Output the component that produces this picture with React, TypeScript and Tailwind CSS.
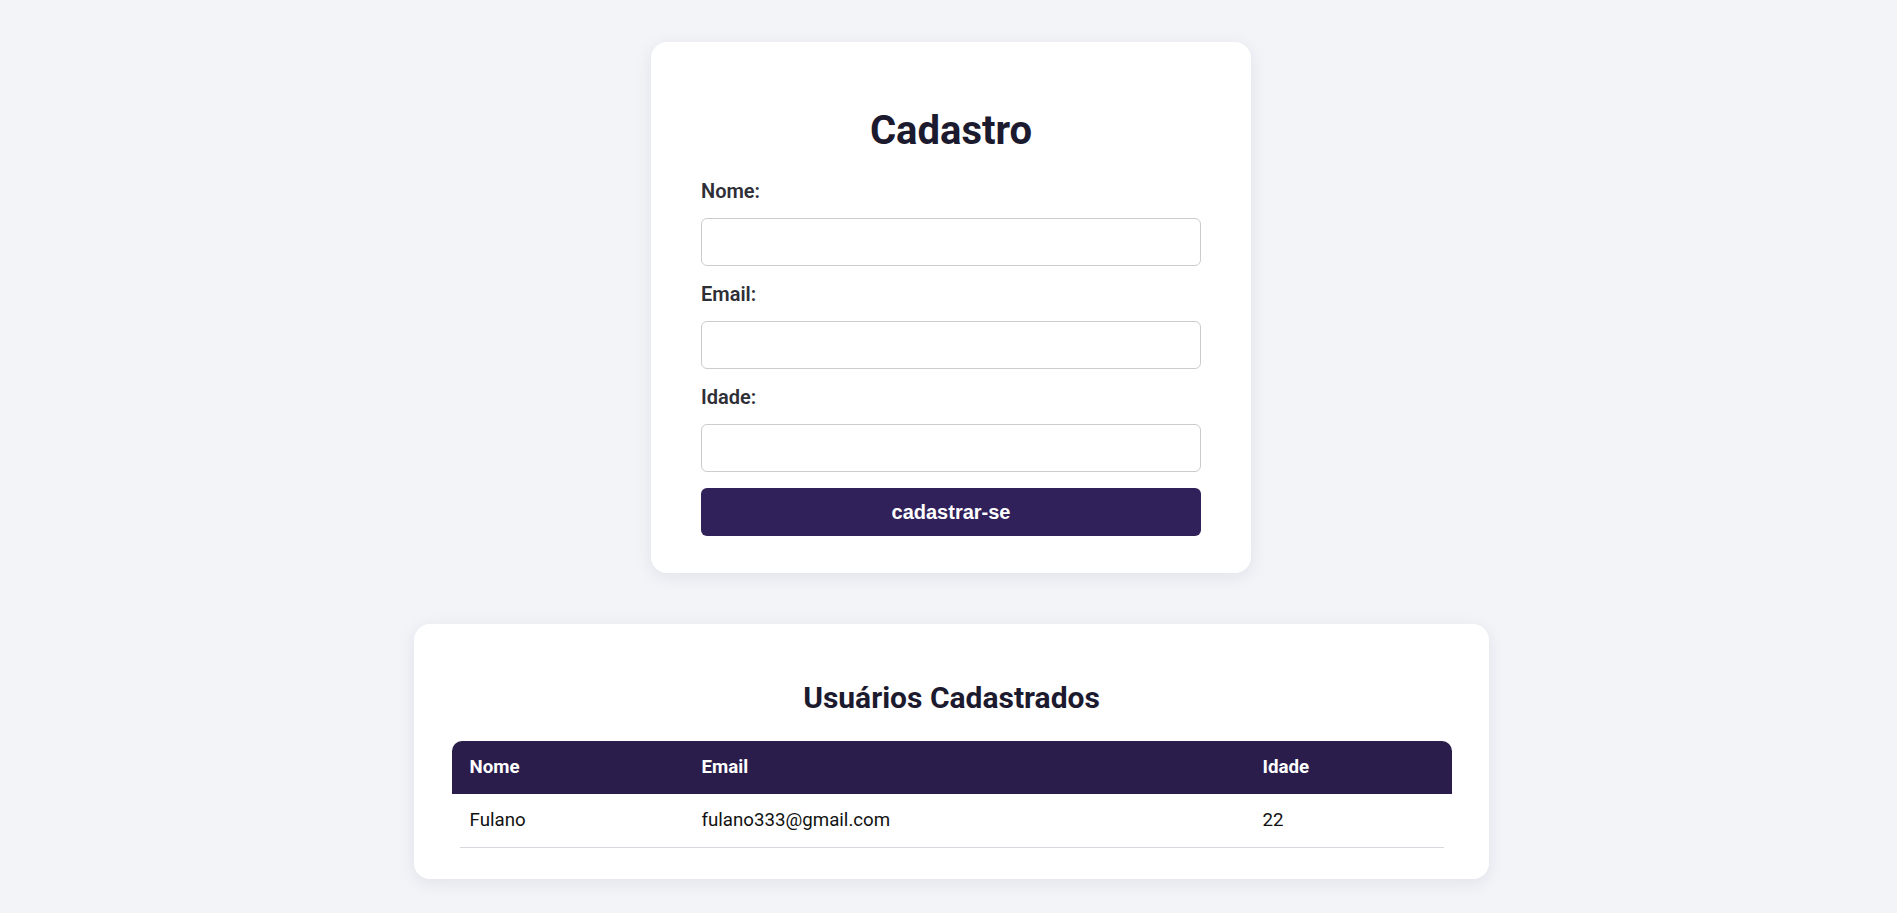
import { useState } from 'react';

const USERS = [{ nome: 'Fulano', email: 'fulano333@gmail.com', idade: 22 }];

const FIELDS = [
  { id: 'nome', label: 'Nome:', type: 'text' },
  { id: 'email', label: 'Email:', type: 'email' },
  { id: 'idade', label: 'Idade:', type: 'number' },
];

export default function App() {
  const [values, setValues] = useState<Record<string, string>>({ nome: '', email: '', idade: '' });

  return (
    <div className="min-h-screen bg-[#f3f4f8] flex flex-col items-center pt-[42px] pb-[40px] pl-[5px] gap-[51px] font-['Roboto',sans-serif]">
      {/* Cadastro form */}
      <div className="w-[600px] bg-white rounded-2xl shadow-[0_4px_18px_rgba(20,20,60,0.08)] px-[50px] pt-[65px] pb-[37px]">
        <h1 className="text-[40px] leading-[47px] font-bold text-center text-[#1c1a2e]">Cadastro</h1>
        <form className="mt-[26px] flex flex-col" onSubmit={e => e.preventDefault()}>
          {FIELDS.map((f, i) => (
            <div key={f.id} className={i > 0 ? 'mt-[17px]' : ''}>
              <label htmlFor={f.id} className="block text-[20px] leading-[22px] font-semibold text-[#2e2e36]">
                {f.label}
              </label>
              <input
                id={f.id}
                type={f.type}
                value={values[f.id]}
                onChange={e => setValues({ ...values, [f.id]: e.target.value })}
                className="mt-[16px] block w-full h-[48px] border border-[#cccccc] rounded-md bg-white px-3 outline-none"
              />
            </div>
          ))}
          <button
            type="submit"
            className="mt-[16px] h-[48px] w-full rounded-md bg-[#30215a] text-white text-[20px] font-bold font-['Liberation_Sans',Arial,sans-serif]"
          >
            cadastrar-se
          </button>
        </form>
      </div>

      {/* Users table */}
      <div className="w-[1075px] bg-white rounded-2xl shadow-[0_4px_18px_rgba(20,20,60,0.08)] pl-[38px] pr-[37px] pt-[56px] pb-[31px]">
        <h2 className="text-[30px] leading-[35px] font-bold text-center text-[#1c1a2e]">Usuários Cadastrados</h2>
        <div className="mt-[26px]">
          <div className="grid grid-cols-[232px_561px_1fr] h-[53px] items-center bg-[#2a1d4c] rounded-t-[10px] text-white text-[18.7px] font-bold">
            <div className="pl-[18px]">Nome</div>
            <div className="pl-[18px]">Email</div>
            <div className="pl-[18px]">Idade</div>
          </div>
          {USERS.map(u => (
            <div key={u.email}>
              <div className="grid grid-cols-[232px_561px_1fr] h-[53px] items-center text-[18.7px] text-[#111]">
                <div className="pl-[18px]">{u.nome}</div>
                <div className="pl-[18px]">{u.email}</div>
                <div className="pl-[18px]">{u.idade}</div>
              </div>
              <div className="mx-2 h-px bg-[#d5d9de]" />
            </div>
          ))}
        </div>
      </div>
    </div>
  );
}
